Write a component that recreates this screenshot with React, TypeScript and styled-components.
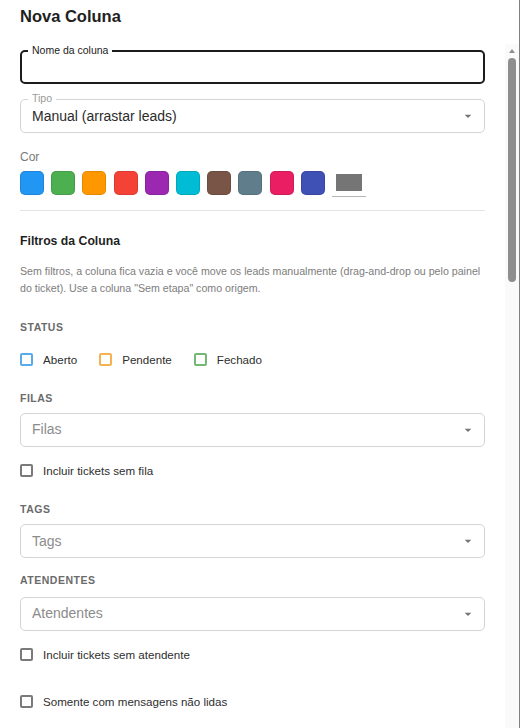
import React from "react";
import styled, { createGlobalStyle } from "styled-components";

const GlobalStyle = createGlobalStyle`
  html, body { margin: 0; padding: 0; background: #fff; }
  body { font-family: "Liberation Sans", Arial, Helvetica, sans-serif; }
  *, *::before, *::after { box-sizing: border-box; }
`;

const Dialog = styled.div`
  width: 520px;
  height: 728px;
  display: flex;
  flex-direction: column;
  background: #fff;
  border-right: 1px solid #808080;
  overflow: hidden;
`;

const Title = styled.h2`
  margin: 0;
  padding: 7px 20px 0;
  height: 44px;
  flex: none;
  font-size: 16.5px;
  line-height: 19px;
  font-weight: 700;
  color: #212121;
`;

const Body = styled.div`
  flex: 1;
  min-height: 0;
  display: flex;
`;

const ScrollArea = styled.div`
  flex: 1;
  min-width: 0;
  overflow: hidden;
`;

const Scrollbar = styled.div`
  width: 14px;
  flex: none;
  display: flex;
  flex-direction: column;
  align-items: center;
  background: #fafafa;
`;

const ScrollButton = styled.svg`
  width: 14px;
  height: 14px;
  flex: none;
  fill: #8e8e8e;
`;

const Thumb = styled.div`
  width: 8px;
  height: 224px;
  border-radius: 4px;
  background: #8e8e8e;
`;

const Content = styled.div`
  display: flex;
  flex-direction: column;
  padding: 6px 20px 20px;
`;

const Field = styled.div<{ $focused?: boolean; $mt?: number }>`
  position: relative;
  height: 34px;
  margin-top: ${(p) => p.$mt ?? 0}px;
  display: flex;
  align-items: center;
  padding: 0 8px 0 ${(p) => (p.$focused ? 10 : 11)}px;
  border: ${(p) => (p.$focused ? "2px solid #1c1c1c" : "1px solid #d4d4d4")};
  border-radius: 5px;
  background: #fff;
`;

const FloatLabel = styled.span<{ $focused?: boolean }>`
  position: absolute;
  top: -8px;
  left: ${(p) => (p.$focused ? 6 : 7)}px;
  padding: 0 4px;
  background: #fff;
  font-size: 10.5px;
  line-height: 12px;
  color: ${(p) => (p.$focused ? "#222" : "#9a9a9a")};
  white-space: nowrap;
`;

const Value = styled.span<{ $placeholder?: boolean }>`
  flex: 1;
  font-size: 14px;
  line-height: 17px;
  color: ${(p) => (p.$placeholder ? "#8c8c8c" : "#2b2b2b")};
`;

const Arrow = styled.svg`
  width: 16px;
  height: 16px;
  flex: none;
  fill: #757575;
`;

const FieldLabel = styled.div<{ $mt?: number }>`
  margin-top: ${(p) => p.$mt ?? 0}px;
  font-size: 12px;
  line-height: 14px;
  color: #7a7a7a;
`;

const SwatchRow = styled.div<{ $mt?: number }>`
  margin-top: ${(p) => p.$mt ?? 0}px;
  display: flex;
  align-items: flex-start;
  gap: 7.2px;
`;

const Swatch = styled.span<{ $color: string }>`
  width: 24px;
  height: 24px;
  flex: none;
  border-radius: 5px;
  background: ${(p) => p.$color};
  box-shadow: inset 0 0 0 1px rgba(0, 0, 0, 0.1);
`;

const ColorInput = styled.span`
  width: 34px;
  height: 26px;
  flex: none;
  padding: 3px 4px 0;
  border-bottom: 1px solid #b5b5b5;
`;

const ColorFill = styled.span<{ $color: string }>`
  display: block;
  width: 26px;
  height: 17px;
  background: ${(p) => p.$color};
`;

const Divider = styled.hr<{ $mt?: number }>`
  margin: ${(p) => p.$mt ?? 0}px 0 0;
  border: none;
  height: 1px;
  background: #e4e4e4;
`;

const Heading = styled.h3<{ $mt?: number }>`
  margin: ${(p) => p.$mt ?? 0}px 0 0;
  font-size: 12.25px;
  line-height: 15px;
  font-weight: 700;
  color: #1f1f1f;
`;

const Description = styled.p<{ $mt?: number }>`
  margin: ${(p) => p.$mt ?? 0}px 0 0;
  font-size: 10.65px;
  line-height: 16.7px;
  color: #7d7d7d;
`;

const SectionLabel = styled.div<{ $mt?: number }>`
  margin-top: ${(p) => p.$mt ?? 0}px;
  font-size: 10.5px;
  line-height: 12px;
  font-weight: 700;
  letter-spacing: 0.5px;
  text-transform: uppercase;
  color: #6b6b6b;
`;

const CheckRow = styled.div<{ $mt?: number }>`
  margin-top: ${(p) => p.$mt ?? 0}px;
  display: flex;
  align-items: center;
  gap: 22px;
`;

const CheckLabel = styled.label<{ $mt?: number }>`
  margin-top: ${(p) => p.$mt ?? 0}px;
  display: flex;
  align-items: center;
  gap: 10px;
  height: 20px;
  font-size: 11.6px;
  color: #2e2e2e;
  cursor: pointer;
`;

const Box = styled.span<{ $color?: string }>`
  width: 13px;
  height: 13px;
  flex: none;
  border: 2px solid ${(p) => p.$color ?? "#7a7a7a"};
  border-radius: 2px;
  background: #fff;
`;

const SWATCHES = [
  "#2196f3",
  "#4caf50",
  "#ff9800",
  "#f44336",
  "#9c27b0",
  "#00bcd4",
  "#795548",
  "#607d8b",
  "#e91e63",
  "#3f51b5",
];

const STATUSES = [
  { label: "Aberto", color: "#5aaae9" },
  { label: "Pendente", color: "#f4b251" },
  { label: "Fechado", color: "#72b874" },
];

const DropArrow = () => (
  <Arrow viewBox="0 0 24 24">
    <path d="M7 10l5 5 5-5z" />
  </Arrow>
);

const Select: React.FC<{ value: string; placeholder?: boolean; label?: string; mt?: number }> = ({
  value,
  placeholder,
  label,
  mt,
}) => (
  <Field $mt={mt}>
    {label && <FloatLabel>{label}</FloatLabel>}
    <Value $placeholder={placeholder}>{value}</Value>
    <DropArrow />
  </Field>
);

const Check: React.FC<{ label: string; color?: string; mt?: number }> = ({ label, color, mt }) => (
  <CheckLabel $mt={mt}>
    <Box $color={color} />
    {label}
  </CheckLabel>
);

export default function App() {
  return (
    <>
      <GlobalStyle />
      <Dialog>
        <Title>Nova Coluna</Title>
        <Body>
          <ScrollArea>
            <Content>
              <Field $focused>
                <FloatLabel $focused>Nome da coluna</FloatLabel>
              </Field>

              <Select mt={15} label="Tipo" value="Manual (arrastar leads)" />

              <FieldLabel $mt={17}>Cor</FieldLabel>
              <SwatchRow $mt={7}>
                {SWATCHES.map((c) => (
                  <Swatch key={c} $color={c} />
                ))}
                <ColorInput>
                  <ColorFill $color="#757575" />
                </ColorInput>
              </SwatchRow>

              <Divider $mt={13} />

              <Heading $mt={23}>Filtros da Coluna</Heading>
              <Description $mt={14}>
                Sem filtros, a coluna fica vazia e você move os leads manualmente (drag-and-drop ou pelo
                painel do ticket). Use a coluna "Sem etapa" como origem.
              </Description>

              <SectionLabel $mt={25}>Status</SectionLabel>
              <CheckRow $mt={16}>
                {STATUSES.map((s) => (
                  <Check key={s.label} label={s.label} color={s.color} />
                ))}
              </CheckRow>

              <SectionLabel $mt={23}>Filas</SectionLabel>
              <Select mt={8.5} value="Filas" placeholder />
              <Check mt={13.5} label="Incluir tickets sem fila" />

              <SectionLabel $mt={22.5}>Tags</SectionLabel>
              <Select mt={9.3} value="Tags" placeholder />

              <SectionLabel $mt={16.2}>Atendentes</SectionLabel>
              <Select mt={10.2} value="Atendentes" placeholder />
              <Check mt={13.8} label="Incluir tickets sem atendente" />

              <Check mt={27} label="Somente com mensagens não lidas" />
            </Content>
          </ScrollArea>
          <Scrollbar>
            <ScrollButton viewBox="0 0 14 14">
              <path d="M4 9L7 5L10 9z" />
            </ScrollButton>
            <Thumb />
          </Scrollbar>
        </Body>
      </Dialog>
    </>
  );
}
